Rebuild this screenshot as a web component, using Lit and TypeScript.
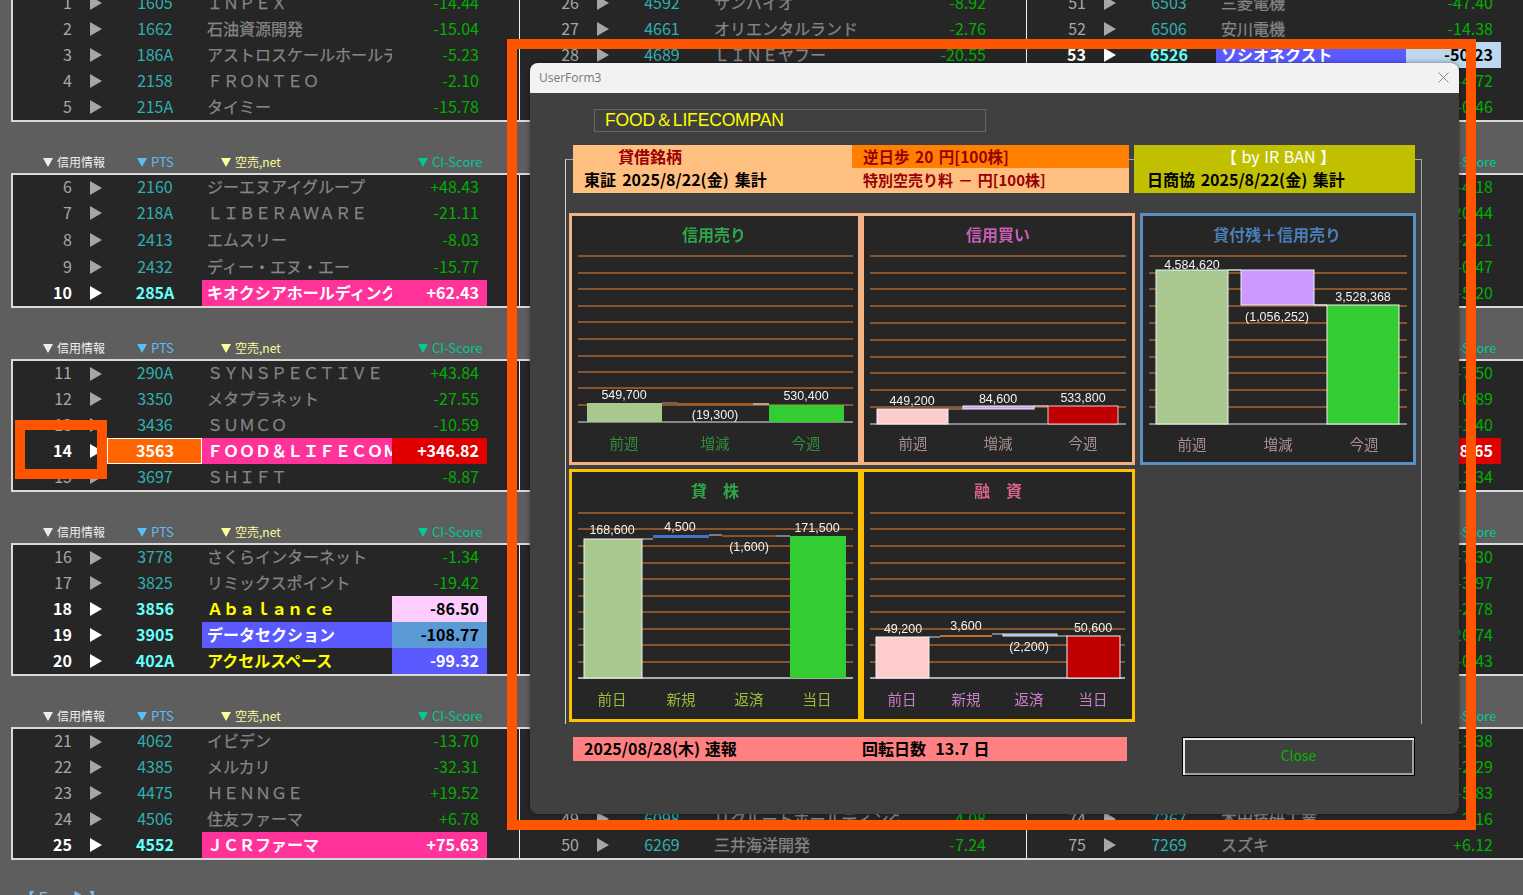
import { LitElement, html, svg, css } from 'lit';
import { customElement } from 'lit/decorators.js';

interface Row {
  num: number;
  code?: string;
  name?: string;
  score?: string;
  hot?: boolean;
  codeBg?: string;
  nameBg?: string;
  nameInk?: string;
  scoreBg?: string;
}

interface Bar { x0: number; x1: number; y0: number; y1: number; fill: string; edge?: string }
interface Link { x0: number; x1: number; y: number; color: string }
interface Chart {
  x: number; y: number; w: number; h: number;
  border: string;
  title: string; titleColor: string; titleX: number; titleY: number;
  lineX: [number, number];
  lines: number[];
  axis: number; axisColor: string;
  links: Link[];
  bars: Bar[];
  values: [string, number, number][];
  labels: [string, number][];
  labelY: number; labelColor: string;
}

const row = (num: number, code?: string, name?: string, score?: string, extra: Partial<Row> = {}): Row =>
  ({ num, code, name, score, ...extra });

const PINK = { hot: true, nameBg: 'bg-pink', scoreBg: 'bg-pink' };

const COL1: Row[] = [
  row(1, '1605', 'ＩＮＰＥＸ', '-14.44'),
  row(2, '1662', '石油資源開発', '-15.04'),
  row(3, '186A', 'アストロスケールホールディングス', '-5.23'),
  row(4, '2158', 'ＦＲＯＮＴＥＯ', '-2.10'),
  row(5, '215A', 'タイミー', '-15.78'),
  row(6, '2160', 'ジーエヌアイグループ', '+48.43'),
  row(7, '218A', 'ＬＩＢＥＲＡＷＡＲＥ', '-21.11'),
  row(8, '2413', 'エムスリー', '-8.03'),
  row(9, '2432', 'ディー・エヌ・エー', '-15.77'),
  row(10, '285A', 'キオクシアホールディングス', '+62.43', PINK),
  row(11, '290A', 'ＳＹＮＳＰＥＣＴＩＶＥ', '+43.84'),
  row(12, '3350', 'メタプラネット', '-27.55'),
  row(13, '3436', 'ＳＵＭＣＯ', '-10.59'),
  row(14, '3563', 'ＦＯＯＤ＆ＬＩＦＥＣＯＭＰＡＮＩＥＳ', '+346.82', { hot: true, codeBg: 'bg-orange', nameBg: 'bg-pink', scoreBg: 'bg-red' }),
  row(15, '3697', 'ＳＨＩＦＴ', '-8.87'),
  row(16, '3778', 'さくらインターネット', '-1.34'),
  row(17, '3825', 'リミックスポイント', '-19.42'),
  row(18, '3856', 'Ａｂａｌａｎｃｅ', '-86.50', { hot: true, nameInk: 'ink-yellow', scoreBg: 'bg-lilac' }),
  row(19, '3905', 'データセクション', '-108.77', { hot: true, nameBg: 'bg-blue', scoreBg: 'bg-steel' }),
  row(20, '402A', 'アクセルスペース', '-99.32', { hot: true, nameInk: 'ink-yellow', scoreBg: 'bg-blue' }),
  row(21, '4062', 'イビデン', '-13.70'),
  row(22, '4385', 'メルカリ', '-32.31'),
  row(23, '4475', 'ＨＥＮＮＧＥ', '+19.52'),
  row(24, '4506', '住友ファーマ', '+6.78'),
  row(25, '4552', 'ＪＣＲファーマ', '+75.63', PINK),
];

// the middle column sits behind the form, only its first and last rows show
const COL2: Row[] = Array.from({ length: 25 }, (_, i) => row(26 + i));
COL2[0] = row(26, '4592', 'サンバイオ', '-8.92');
COL2[1] = row(27, '4661', 'オリエンタルランド', '-2.76');
COL2[2] = row(28, '4689', 'ＬＩＮＥヤフー', '-20.55');
COL2[23] = row(49, '6098', 'リクルートホールディングス', '-4.08');
COL2[24] = row(50, '6269', '三井海洋開発', '-7.24');

const COL3: Row[] = [
  '-47.40', '-14.38', '-50.23', '-4.72', '-0.46',
  '-4.18', '-20.44', '-2.21', '-0.47', '-5.20',
  '-7.50', '-0.89', '-1.40', '+18.65', '-11.34',
  '-7.30', '-3.97', '-2.78', '-26.74', '-0.43',
  '-1.38', '-2.29', '-5.83', '-2.16', '+6.12',
].map((score, i) => row(51 + i, undefined, undefined, score));
COL3[0] = row(51, '6503', '三菱電機', '-47.40');
COL3[1] = row(52, '6506', '安川電機', '-14.38');
COL3[2] = row(53, '6526', 'ソシオネクスト', '-50.23', { hot: true, nameBg: 'bg-blue', scoreBg: 'bg-sky' });
COL3[13] = row(64, undefined, undefined, '+18.65', { hot: true, scoreBg: 'bg-red' });
COL3[23] = row(74, '7267', '本田技研工業', '-2.16');
COL3[24] = row(75, '7269', 'スズキ', '+6.12');

const GRID_Y = [256, 273, 289, 306, 323, 340, 357, 373, 390, 407];
const GRID_Y2 = [513, 529, 546, 563, 579, 596, 612, 629, 645, 662];
const MOSS = '#a9c88e';
const GREEN = '#33cc33';
const ROSE = '#ffcccc';
const CRIMSON = '#c00000';
const PURPLE = '#cc99ff';
const WHITE = '#f2f2f2';

const CHARTS: Chart[] = [
  {
    x: 569, y: 213, w: 292, h: 252, border: '#f4b183',
    title: '信用売り', titleColor: '#2fa84a', titleX: 714, titleY: 234,
    lineX: [578, 853], lines: [256, 273, 289, 306, 322, 339, 356, 372, 388, 405],
    axis: 422, axisColor: '#a6a6a6',
    links: [
      { x0: 662, x1: 678, y: 403, color: '#8c7a66' },
      { x0: 678, x1: 753, y: 404, color: '#b5682c' },
      { x0: 753, x1: 769, y: 404, color: '#d8c4b4' },
    ],
    bars: [
      { x0: 587, x1: 662, y0: 403, y1: 422, fill: MOSS },
      { x0: 769, x1: 844, y0: 405, y1: 422, fill: GREEN },
    ],
    values: [['549,700', 624, 395], ['(19,300)', 715, 415], ['530,400', 806, 396]],
    labels: [['前週', 624], ['増減', 715], ['今週', 806]],
    labelY: 442, labelColor: '#2f8f3a',
  },
  {
    x: 861, y: 213, w: 274, h: 252, border: '#f4b183',
    title: '信用買い', titleColor: '#c95fb5', titleX: 998, titleY: 234,
    lineX: [870, 1126], lines: GRID_Y,
    axis: 424, axisColor: '#a6a6a6',
    links: [
      { x0: 948, x1: 963, y: 409, color: '#8c7a66' },
      { x0: 1034, x1: 1048, y: 406, color: '#d8c4b4' },
    ],
    bars: [
      { x0: 877, x1: 948, y0: 409, y1: 424, fill: ROSE, edge: WHITE },
      { x0: 963, x1: 1034, y0: 406, y1: 409, fill: PURPLE, edge: WHITE },
      { x0: 1048, x1: 1118, y0: 406, y1: 424, fill: CRIMSON, edge: '#e8c8c8' },
    ],
    values: [['449,200', 912, 401], ['84,600', 998, 399], ['533,800', 1083, 398]],
    labels: [['前週', 913], ['増減', 998], ['今週', 1083]],
    labelY: 442, labelColor: '#a89090',
  },
  {
    x: 1140, y: 213, w: 276, h: 252, border: '#5b8fc4',
    title: '貸付残＋信用売り', titleColor: '#4a7fb8', titleX: 1277, titleY: 234,
    lineX: [1149, 1407], lines: GRID_Y,
    axis: 424, axisColor: '#a6a6a6',
    links: [
      { x0: 1228, x1: 1241, y: 270, color: '#d8d8d8' },
      { x0: 1314, x1: 1327, y: 305, color: '#f2f2f2' },
    ],
    bars: [
      { x0: 1156, x1: 1228, y0: 270, y1: 424, fill: MOSS, edge: WHITE },
      { x0: 1241, x1: 1314, y0: 270, y1: 305, fill: PURPLE, edge: WHITE },
      { x0: 1327, x1: 1399, y0: 305, y1: 424, fill: GREEN, edge: WHITE },
    ],
    values: [['4,584,620', 1192, 265], ['(1,056,252)', 1277, 317], ['3,528,368', 1363, 297]],
    labels: [['前週', 1192], ['増減', 1278], ['今週', 1364]],
    labelY: 443, labelColor: '#a89090',
  },
  {
    x: 569, y: 469, w: 292, h: 253, border: '#ffc000',
    title: '貸　株', titleColor: '#2fa84a', titleX: 715, titleY: 490,
    lineX: [578, 853], lines: GRID_Y2,
    axis: 678, axisColor: '#d8d8d8',
    links: [
      { x0: 642, x1: 653, y: 539, color: '#9a9a9a' },
      { x0: 709, x1: 722, y: 535, color: '#9a9a9a' },
      { x0: 722, x1: 776, y: 536, color: '#a8642e' },
      { x0: 776, x1: 790, y: 536, color: '#9a9a9a' },
    ],
    bars: [
      { x0: 584, x1: 642, y0: 539, y1: 678, fill: MOSS, edge: WHITE },
      { x0: 653, x1: 709, y0: 535, y1: 538, fill: '#4472c4' },
      { x0: 790, x1: 846, y0: 536, y1: 678, fill: GREEN },
    ],
    values: [['168,600', 612, 530], ['4,500', 680, 527], ['(1,600)', 749, 547], ['171,500', 817, 528]],
    labels: [['前日', 612], ['新規', 681], ['返済', 749], ['当日', 817]],
    labelY: 698, labelColor: '#9bbb3c',
  },
  {
    x: 861, y: 469, w: 274, h: 253, border: '#ffc000',
    title: '融　資', titleColor: '#d9668a', titleX: 998, titleY: 490,
    lineX: [870, 1125], lines: GRID_Y2,
    axis: 678, axisColor: '#d8d8d8',
    links: [
      { x0: 929, x1: 940, y: 637, color: '#9a9a9a' },
      { x0: 992, x1: 1003, y: 634, color: '#9a9a9a' },
      { x0: 1057, x1: 1067, y: 636, color: '#9a9a9a' },
    ],
    bars: [
      { x0: 876, x1: 929, y0: 637, y1: 678, fill: ROSE, edge: WHITE },
      { x0: 940, x1: 992, y0: 635, y1: 637, fill: '#c07030' },
      { x0: 1003, x1: 1057, y0: 634, y1: 636, fill: '#8faadc', edge: '#dfe7f5' },
      { x0: 1067, x1: 1120, y0: 636, y1: 678, fill: CRIMSON, edge: WHITE },
    ],
    values: [['49,200', 903, 629], ['3,600', 966, 626], ['(2,200)', 1029, 647], ['50,600', 1093, 628]],
    labels: [['前日', 902], ['新規', 966], ['返済', 1029], ['当日', 1093]],
    labelY: 698, labelColor: '#c77fc7',
  },
];

@customElement('app-root')
export class AppRoot extends LitElement {
  static styles = css`
    :host {
      display: block;
      position: relative;
      height: 895px;
      overflow: hidden;
      background: #5e5e5e;
      font-family: 'Noto Sans CJK JP', 'Noto Sans', sans-serif;
    }

    .sheet {
      margin-top: -12px;
    }

    .heads {
      display: grid;
      grid-template-columns: 507px 507px 1fr;
      height: 51px;
      margin-left: 13px;
      align-items: end;
      white-space: nowrap;
    }

    .head {
      display: grid;
      grid-template-columns: 94px 84px 197px 1fr;
      padding: 0 0 4px 30px;
      font-size: 12px;
      line-height: 14px;
    }

    .head span {
      display: flex;
      align-items: center;
      gap: 4px;
    }

    .head i {
      display: block;
      width: 0;
      height: 0;
      border-left: 5px solid transparent;
      border-right: 5px solid transparent;
      border-top: 9px solid currentColor;
    }

    .h-credit { color: #eeeeee; }
    .h-pts { color: #5cbcf6; font-size: 13px; }
    .h-short { color: #ffff99; }
    .h-ci { color: #00c896; font-size: 13px; }

    .box {
      display: grid;
      grid-template-columns: 507px 507px 1fr;
      margin-left: 11px;
      border: 2px solid #d9d9d9;
      border-right: 0;
      background: #262626;
    }

    .col {
      border-right: 1px solid #f0f0f0;
      min-width: 0;
    }

    .col:last-child {
      border-right: 0;
    }

    .row {
      display: grid;
      grid-template-columns: 59px 35px 95px 190px 95px;
      height: 26px;
      font-size: 16px;
      line-height: 24px;
      white-space: nowrap;
    }

    .row.short { height: 25px; line-height: 23px; }
    .row.tall { height: 28px; line-height: 26px; }

    .num { text-align: right; color: #a6a6a6; }
    .arrow { display: flex; align-items: center; padding-left: 18px; }

    .arrow i {
      display: block;
      width: 0;
      height: 0;
      border-top: 7px solid transparent;
      border-bottom: 7px solid transparent;
      border-left: 12px solid #a6a6a6;
    }

    .code { text-align: center; color: #2fb0b0; padding-left: 1px; }
    .name { overflow: hidden; padding-left: 5px; color: #858585; -webkit-text-stroke: 0.25px currentColor; }
    .score { text-align: right; padding-right: 8px; color: #00b000; }

    .hot { font-weight: 700; }
    .hot .num { color: #ffffff; }
    .hot .arrow i { border-left-color: #ffffff; }
    .hot .code { color: #66ffff; }
    .hot .name { color: #ffffff; -webkit-text-stroke: 0; }
    .hot .score { color: #ffffff; }

    .hot .bg-pink { background: #ff3399; color: #ffffff; }
    .hot .bg-blue { background: #5a5aff; color: #ffffff; }
    .hot .bg-red { background: #e00000; color: #ffffff; }
    .hot .bg-orange { background: #ff6600; color: #ffffff; box-shadow: inset 0 0 0 1px #ffffff; }
    .hot .bg-lilac { background: #ffccff; color: #000000; }
    .hot .bg-steel { background: #5b9bd5; color: #000000; }
    .hot .bg-sky { background: #bdd7ee; color: #000000; }
    .hot .ink-yellow { color: #ffff00; }

    .pager {
      margin: 25px 0 0 19px;
      font-size: 16px;
      line-height: 24px;
      color: #86b8ea;
      white-space: pre;
    }

    /* the form window */
    .form {
      position: absolute;
      left: 530px;
      top: 63px;
      width: 929px;
      height: 751px;
      background: #404040;
      border-radius: 8px;
      box-shadow: 0 0 5px rgba(0, 0, 0, 0.45);
    }

    .titlebar {
      display: flex;
      align-items: center;
      justify-content: space-between;
      height: 30px;
      box-sizing: border-box;
      padding: 0 10px 2px 9px;
      background: #f2f2f2;
      border-radius: 8px 8px 0 0;
      font-family: 'Open Sans', sans-serif;
      font-size: 12px;
      color: #777777;
    }

    .titlebar svg { display: block; }

    .body {
      position: relative;
      padding-top: 16px;
    }

    .frame {
      position: absolute;
      left: 35px;
      top: 66px;
      width: 855px;
      height: 564px;
      border: 1px solid #a8a8a8;
      border-bottom: 0;
      border-left-color: #d8d8d8;
    }

    .stock {
      position: relative;
      width: 392px;
      height: 23px;
      box-sizing: border-box;
      margin-left: 64px;
      padding-left: 10px;
      border: 1px solid #666666;
      font-family: 'Liberation Sans', sans-serif;
      font-size: 17.5px;
      letter-spacing: -0.15px;
      line-height: 20px;
      color: #ffff00;
      white-space: nowrap;
    }

    .strip {
      position: relative;
      display: flex;
      gap: 5px;
      height: 48px;
      margin: 13px 0 0 43px;
      font-size: 16px;
      font-weight: 700;
      line-height: 23px;
    }

    .strip div { white-space: pre; }

    .lend {
      display: grid;
      grid-template-columns: 279px 277px;
      grid-template-rows: 23px 25px;
      background: #ffbf80;
      color: #990000;
    }

    .lend div { padding-left: 11px; }
    .lend .stamp { padding-left: 45px; }
    .lend .date { color: #000000; word-spacing: 2.5px; }
    .lend .fee { background: #ff8000; font-size: 15.5px; word-spacing: 2px; }
    .lend .levy { font-size: 15px; word-spacing: 1.5px; }

    .irban {
      display: grid;
      grid-template-rows: 23px 25px;
      width: 281px;
      background: #c0c000;
      color: #000000;
    }

    .irban .by {
      padding-left: 8px;
      text-align: center;
      color: #ffffff;
      font-weight: 400;
      word-spacing: 1px;
    }

    .irban .date { padding-left: 13px; word-spacing: 2px; }

    .charts {
      position: relative;
      display: grid;
      grid-template-columns: 292px 274px 281px;
      grid-template-rows: 252px 253px;
      row-gap: 4px;
      margin: 20px 0 0 39px;
    }

    .chart {
      box-sizing: border-box;
      border: 3px solid;
      background: #262626;
    }

    .chart.third {
      margin-left: 5px;
    }

    .chart svg {
      display: block;
      filter: blur(0.3px);
    }

    .chart .big { font-size: 16px; font-weight: 700; }
    .chart .cat { font-size: 14.5px; }
    .chart .val { font-family: 'Liberation Sans', sans-serif; font-size: 12.5px; fill: #f2f2f2; }

    .foot {
      position: relative;
      display: flex;
      margin: 15px 0 0 43px;
    }

    .flash {
      display: grid;
      grid-template-columns: 278px 1fr;
      width: 554px;
      height: 24px;
      box-sizing: border-box;
      padding-left: 11px;
      background: #ff8080;
      color: #000000;
      font-size: 16px;
      font-weight: 700;
      line-height: 23px;
    }

    .flash span { white-space: pre; word-spacing: 1px; }

    .close {
      width: 233px;
      height: 39px;
      box-sizing: border-box;
      margin-left: 55px;
      border: 1px solid #000000;
      padding: 0 0 3px;
      background: #404040;
      box-shadow: inset 2px 2px 0 #e8e8e8, inset -2px -2px 0 #a0a0a0;
      color: #00b800;
      font-family: 'Noto Sans CJK JP', sans-serif;
      font-size: 14px;
    }

    /* annotation boxes drawn over the screenshot */
    .mark {
      position: absolute;
      box-sizing: border-box;
      border: 10px solid #ff5500;
      pointer-events: none;
    }

    .mark.big-mark { left: 507px; top: 39px; width: 969px; height: 791px; }
    .mark.small-mark { left: 15px; top: 420px; width: 92px; height: 59px; }
  `;

  private renderHead() {
    return html`
      <div class="head">
        <span class="h-credit"><i></i>信用情報</span>
        <span class="h-pts"><i></i>PTS</span>
        <span class="h-short"><i></i>空売,net</span>
        <span class="h-ci"><i></i>CI-Score</span>
      </div>
    `;
  }

  private renderRow(r: Row, height: string) {
    return html`
      <div class="row ${height} ${r.hot ? 'hot' : ''}">
        <div class="num">${r.num}</div>
        <div class="arrow"><i></i></div>
        <div class="code ${r.codeBg ?? ''}">${r.code}</div>
        <div class="name ${r.nameBg ?? ''} ${r.nameInk ?? ''}">${r.name}</div>
        <div class="score ${r.scoreBg ?? ''}">${r.score}</div>
      </div>
    `;
  }

  private renderGroup(g: number) {
    const start = g * 5;
    const heightOf = (i: number) => {
      if (g > 0 && i === 0) return 'short';
      if (g === 1 && i === 2) return 'tall';
      return '';
    };
    return html`
      ${g > 0
        ? html`<div class="heads">${this.renderHead()}${this.renderHead()}${this.renderHead()}</div>`
        : ''}
      <div class="box">
        ${[COL1, COL2, COL3].map(
          (col) => html`
            <div class="col">
              ${col.slice(start, start + 5).map((r, i) => this.renderRow(r, heightOf(i)))}
            </div>
          `
        )}
      </div>
    `;
  }

  private renderChart(c: Chart, third: boolean) {
    const w = c.w - 6;
    const h = c.h - 6;
    return html`
      <div class="chart ${third ? 'third' : ''}" style="border-color:${c.border}">
        <svg width=${w} height=${h} viewBox="${c.x + 3} ${c.y + 3} ${w} ${h}">
          ${c.lines.map(
            (y) => svg`<line x1=${c.lineX[0]} x2=${c.lineX[1]} y1=${y} y2=${y} stroke="#a8642e" stroke-width="1.5"></line>`
          )}
          <line x1=${c.lineX[0]} x2=${c.lineX[1]} y1=${c.axis} y2=${c.axis} stroke=${c.axisColor} stroke-width="1.5"></line>
          ${c.links.map(
            (l) => svg`<line x1=${l.x0} x2=${l.x1} y1=${l.y} y2=${l.y} stroke=${l.color} stroke-width="1.5"></line>`
          )}
          ${c.bars.map(
            (b) => svg`<rect x=${b.x0} y=${b.y0} width=${b.x1 - b.x0} height=${b.y1 - b.y0} fill=${b.fill}
              stroke=${b.edge ?? 'none'} stroke-width="1"></rect>`
          )}
          <text class="big" x=${c.titleX} y=${c.titleY} fill=${c.titleColor} text-anchor="middle" dominant-baseline="central">${c.title}</text>
          ${c.values.map(
            ([t, x, y]) => svg`<text class="val" x=${x} y=${y} text-anchor="middle" dominant-baseline="central">${t}</text>`
          )}
          ${c.labels.map(
            ([t, x]) => svg`<text class="cat" x=${x} y=${c.labelY} fill=${c.labelColor} text-anchor="middle" dominant-baseline="central">${t}</text>`
          )}
        </svg>
      </div>
    `;
  }

  render() {
    return html`
      <div class="sheet">
        ${[0, 1, 2, 3, 4].map((g) => this.renderGroup(g))}
        <div class="pager">【 F       ▶】</div>
      </div>

      <div class="form">
        <div class="titlebar">
          <span>UserForm3</span>
          <svg width="11" height="11" viewBox="0 0 11 11">
            <path d="M0.5 0.5 L10.5 10.5 M10.5 0.5 L0.5 10.5" stroke="#8a8a8a" fill="none"></path>
          </svg>
        </div>
        <div class="body">
          <div class="frame"></div>
          <div class="stock">FOOD＆LIFECOMPAN</div>
          <div class="strip">
            <div class="lend">
              <div class="stamp">貸借銘柄</div>
              <div class="fee">逆日歩 20 円[100株]</div>
              <div class="date">東証 2025/8/22(金) 集計</div>
              <div class="levy">特別空売り料 － 円[100株]</div>
            </div>
            <div class="irban">
              <div class="by">【 by IR BAN 】</div>
              <div class="date">日商協 2025/8/22(金) 集計</div>
            </div>
          </div>
          <div class="charts">
            ${CHARTS.map((c, i) => this.renderChart(c, i === 2))}
            <div></div>
          </div>
          <div class="foot">
            <div class="flash">
              <span>2025/08/28(木) 速報</span>
              <span>回転日数  13.7 日</span>
            </div>
            <button class="close">Close</button>
          </div>
        </div>
      </div>

      <div class="mark big-mark"></div>
      <div class="mark small-mark"></div>
    `;
  }
}

declare global {
  interface HTMLElementTagNameMap {
    'app-root': AppRoot;
  }
}
